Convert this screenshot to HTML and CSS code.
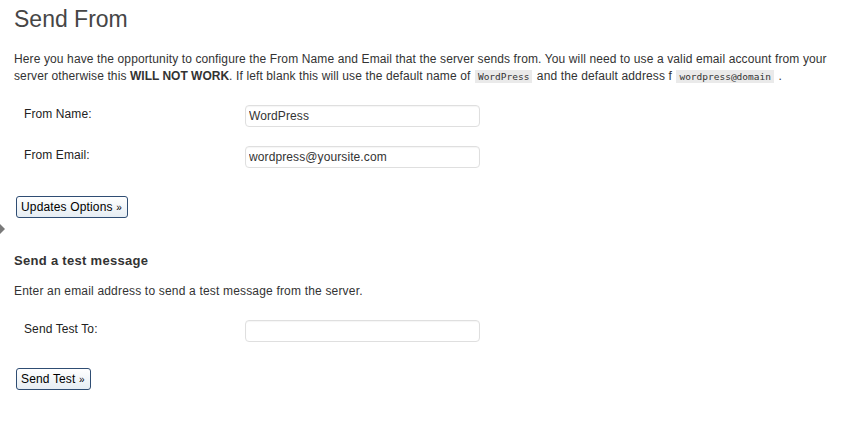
FILE: index.html
```html
<!DOCTYPE html>
<html>
<head>
<meta charset="utf-8">
<link rel="stylesheet" href="styles.css">
</head>
<body>
<div class="arrow"></div>
<div class="wrap">
  <h2 class="title">Send From</h2>
  <p class="intro">Here you have the opportunity to configure the From Name and Email that the server sends from. You will need to use a valid email account from your server otherwise this <strong>WILL NOT WORK</strong>. If left blank this will use the default name of <code>WordPress</code> and the default address f <code>wordpress@domain</code> .</p>
  <div class="form">
    <div class="row">
      <label class="lbl">From Name:</label>
      <input class="field" type="text" value="WordPress">
    </div>
    <div class="row">
      <label class="lbl">From Email:</label>
      <input class="field" type="text" value="wordpress@yoursite.com">
    </div>
  </div>
  <div class="actions first"><button class="btn">Updates Options <span class="raquo">»</span></button></div>
  <h3 class="sub">Send a test message</h3>
  <p class="note">Enter an email address to send a test message from the server.</p>
  <div class="form">
    <div class="row">
      <label class="lbl">Send Test To:</label>
      <input class="field" type="text" value="">
    </div>
  </div>
  <div class="actions second"><button class="btn">Send Test <span class="raquo">»</span></button></div>
</div>
</body>
</html>
```
FILE: styles.css
```css
html, body {
  margin: 0;
  padding: 0;
  background: #fff;
}
body {
  font-family: "Liberation Sans", Arial, sans-serif;
  font-size: 12px;
  color: #333;
  position: relative;
}
.arrow {
  position: absolute;
  left: 0;
  top: 224px;
  width: 0;
  height: 0;
  border-top: 5px solid transparent;
  border-bottom: 5px solid transparent;
  border-left: 5px solid #7a7a7a;
}
.wrap {
  padding: 0 14px;
}
.title {
  margin: 0;
  padding-top: 5px;
  font-size: 23px;
  font-weight: normal;
  color: #464646;
  line-height: 29px;
}
.intro {
  margin: 17px 0 0;
  line-height: 17px;
  letter-spacing: 0.12px;
}
.intro strong {
  letter-spacing: 0;
}
code {
  font-family: "DejaVu Sans Mono", "Liberation Mono", monospace;
  font-size: 9.5px;
  letter-spacing: 0;
  background: #eaeaea;
  padding: 1px 3px;
  margin: 0 1px;
  color: #333;
}
.form {
  display: flex;
  flex-direction: column;
  gap: 19px;
}
.intro + .form {
  margin-top: 20px;
}
.note + .form {
  margin-top: 20px;
}
.row {
  display: grid;
  grid-template-columns: 231px 235px;
  align-items: start;
}
.lbl {
  padding-left: 10px;
  padding-top: 2px;
  line-height: 14px;
  color: #222;
  letter-spacing: 0.1px;
}
.field {
  box-sizing: border-box;
  width: 235px;
  height: 22px;
  margin: 0;
  border: 1px solid #dfdfdf;
  border-radius: 4px;
  padding: 0 3px;
  font-family: "Liberation Sans", Arial, sans-serif;
  font-size: 12px;
  letter-spacing: 0.1px;
  color: #333;
  background: #fff;
  box-shadow: inset 0 1px 1px rgba(0,0,0,0.04);
}
.actions {
  padding-left: 2px;
}
.actions.first {
  margin-top: 28px;
}
.actions.second {
  margin-top: 26px;
}
.btn {
  height: 22px;
  padding: 0 5px 0 4px;
  border: 1px solid #2f4d73;
  border-radius: 3px;
  background: linear-gradient(#ffffff, #e6edf3);
  font-family: "Liberation Sans", Arial, sans-serif;
  font-size: 12px;
  letter-spacing: 0.15px;
  color: #000;
  line-height: 18px;
}
.raquo {
  font-size: 10px;
}
.sub {
  margin: 35px 0 0;
  font-size: 13px;
  font-weight: bold;
  color: #333;
  line-height: 16px;
  letter-spacing: 0.3px;
}
.note {
  margin: 14px 0 0;
  line-height: 17px;
  letter-spacing: 0.18px;
}
```
